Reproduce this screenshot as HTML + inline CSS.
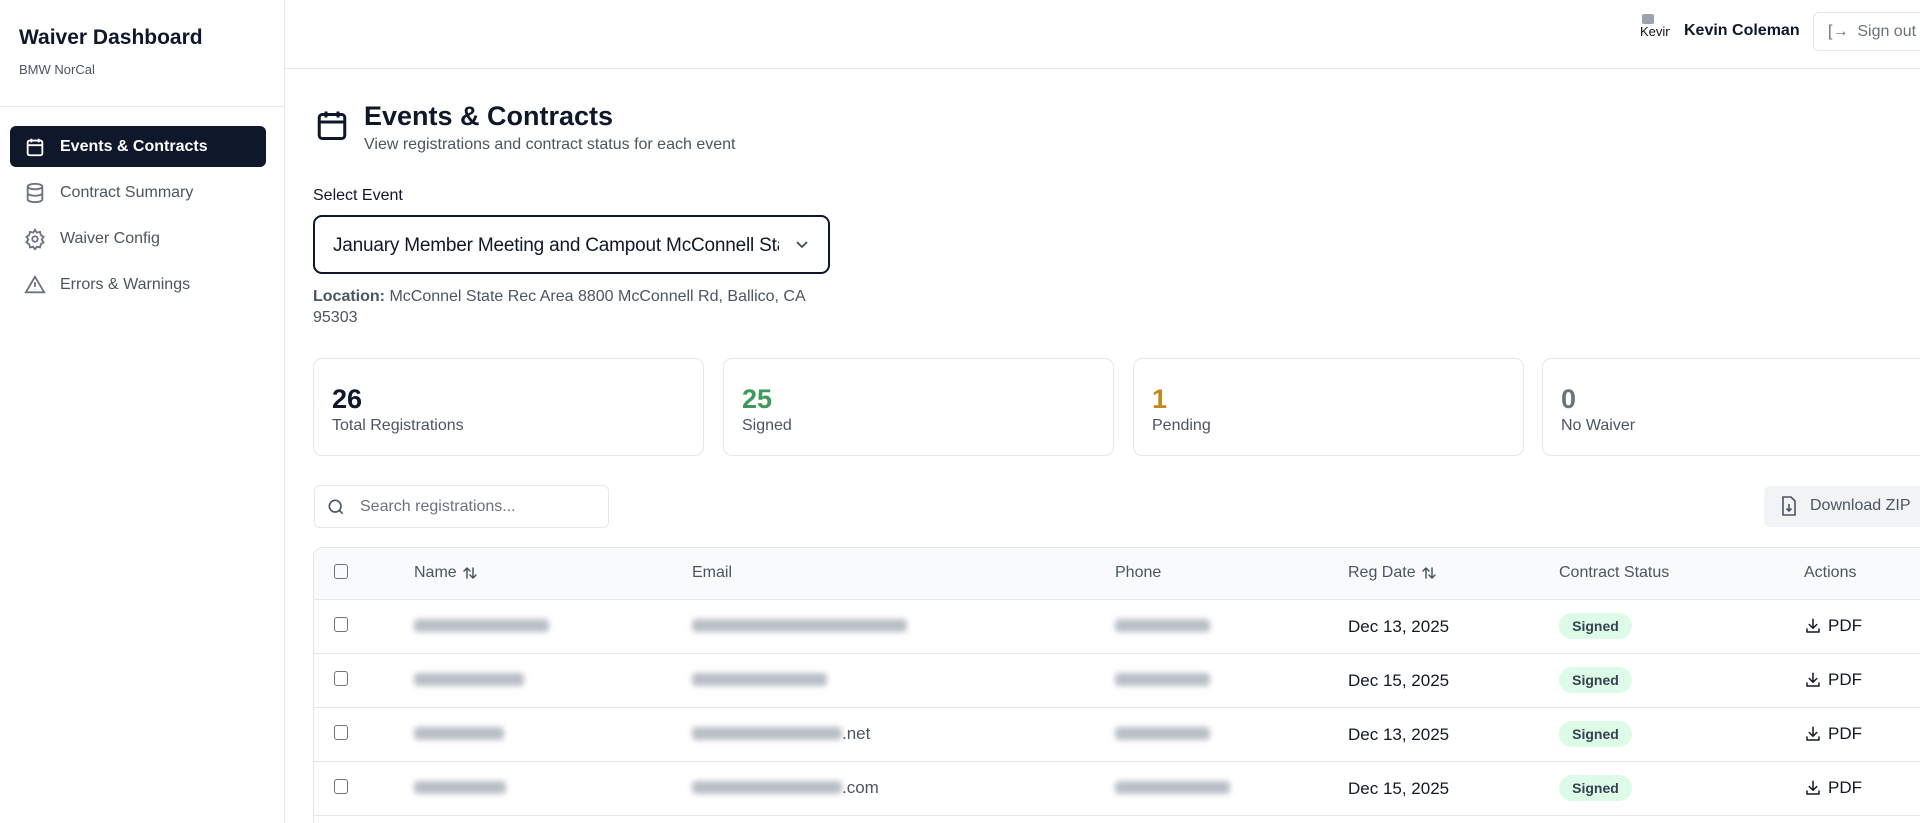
<!DOCTYPE html>
<html><head><meta charset="utf-8"><style>
*{box-sizing:border-box;margin:0;padding:0}
html,body{width:1920px;height:823px;overflow:hidden}
body{background:#fff;font-family:"Liberation Sans",sans-serif;color:#0f172a;position:relative}
.abs{position:absolute}
.side{left:0;top:0;width:285px;height:823px;border-right:1px solid #e5e7eb}
.nav{position:absolute;left:10px;width:256px;height:41px;border-radius:6px;display:flex;align-items:center;padding-left:14px;font-size:16px;color:#4b5563;font-weight:500}
.nav svg{margin-right:14px}
.nav.act{background:#0f172a;color:#fff;font-weight:600}
.card{position:absolute;top:358px;height:98px;border:1px solid #e5e7eb;border-radius:9px;width:391px}
.card .n{position:absolute;left:18px;top:25px;font-size:27px;font-weight:700}
.card .l{position:absolute;left:18px;top:58px;font-size:16px;color:#4b5563}
.th{position:absolute;font-size:16px;color:#4b5563;font-weight:500;line-height:20px;display:flex;align-items:center;gap:5px}
.cb{position:absolute;left:334px;width:14px;height:15px;border:1.5px solid #6b7280;border-radius:3px}
.blur{position:absolute;height:13px;background:#9ca3af;filter:blur(3px);border-radius:4px;opacity:.7}
.date{position:absolute;left:1348px;font-size:17px;color:#111827}
.badge{position:absolute;left:1559px;width:73px;height:26px;border-radius:13px;background:#dcfce7;color:#374151;font-size:14px;font-weight:600;text-align:center;line-height:26px}
.pdf{position:absolute;left:1804px;font-size:17px;color:#111827;display:flex;align-items:center;gap:6px;line-height:20px}
.row{position:absolute;left:313px;width:1607px;height:1px;background:#e5e7eb}
</style></head><body>
<svg width="0" height="0" style="position:absolute"><defs>
<symbol id="dl" viewBox="0 0 24 24"><path d="M12 3v12M7 10l5 5 5-5M4 16v4h16v-4" fill="none" stroke="#111827" stroke-width="2" stroke-linecap="round" stroke-linejoin="round"/></symbol>
<symbol id="sort" viewBox="0 0 16 16"><path d="M5 13V3M2 6l3-3 3 3M11 3v10M8 10l3 3 3-3" fill="none" stroke="#4b5563" stroke-width="1.5" stroke-linecap="round" stroke-linejoin="round"/></symbol>
</defs></svg>
<div class="abs side">
  <div class="abs" style="left:19px;top:26px;font-size:21px;font-weight:700">Waiver Dashboard</div>
  <div class="abs" style="left:19px;top:62px;font-size:13px;color:#4b5563">BMW NorCal</div>
  <div class="abs" style="left:0;top:106px;width:285px;height:1px;background:#e5e7eb"></div>
  <div class="nav act" style="top:126px"><svg width="22" height="22" viewBox="0 0 24 24" fill="none" stroke="#fff" stroke-width="2"><rect x="4" y="5" width="16" height="16" rx="2"/><path d="M8 3v4M16 3v4M4 10h16"/></svg>Events &amp; Contracts</div>
  <div class="nav" style="top:172px"><svg width="22" height="22" viewBox="0 0 24 24" fill="none" stroke="#6b7280" stroke-width="2"><ellipse cx="12" cy="5" rx="8" ry="3"/><path d="M4 5v14c0 1.7 3.6 3 8 3s8-1.3 8-3V5M4 12c0 1.7 3.6 3 8 3s8-1.3 8-3"/></svg>Contract Summary</div>
  <div class="nav" style="top:218px"><svg width="22" height="22" viewBox="0 0 24 24" fill="none" stroke="#6b7280" stroke-width="2"><circle cx="12" cy="12" r="3"/><path d="M12 2l2 3 3.5-.8.8 3.5 3 2-2 3 2 3-3 2-.8 3.5-3.5-.8-2 3-2-3-3.5.8-.8-3.5-3-2 2-3-2-3 3-2 .8-3.5 3.5.8z"/></svg>Waiver Config</div>
  <div class="nav" style="top:264px"><svg width="22" height="22" viewBox="0 0 24 24" fill="none" stroke="#6b7280" stroke-width="2"><path d="M12 3L2 20h20z M12 9v5M12 17v.5"/></svg>Errors &amp; Warnings</div>
</div>
<div class="abs" style="left:285px;top:68px;width:1635px;height:1px;background:#e5e7eb"></div>
<div class="abs" style="left:1640px;top:14px;width:30px;height:34px;font-size:13px;overflow:hidden;color:#111"><div style="width:12px;height:10px;background:#9ca3af;margin-left:2px;border-radius:2px"></div>Kevin</div>
<div class="abs" style="left:1684px;top:22px;font-size:16px;font-weight:600">Kevin Coleman</div>
<div class="abs" style="left:1813px;top:12px;width:107px;height:39px;border:1px solid #e5e7eb;border-right:none;border-radius:6px 0 0 6px;font-size:16px;color:#6b7280;padding:10px 0 0 14px;white-space:nowrap;overflow:hidden">[→&nbsp; Sign out</div>

<svg class="abs" style="left:314px;top:107px" width="36" height="36" viewBox="0 0 24 24" fill="none" stroke="#0f172a" stroke-width="2"><rect x="3.5" y="5" width="17" height="16" rx="2"/><path d="M8 3v4M16 3v4M3.5 10h17"/></svg>
<div class="abs" style="left:364px;top:101px;font-size:27px;font-weight:700">Events &amp; Contracts</div>
<div class="abs" style="left:364px;top:136px;font-size:16px;color:#4b5563">View registrations and contract status for each event</div>
<div class="abs" style="left:313px;top:187px;font-size:16px;font-weight:500">Select Event</div>
<div class="abs" style="left:313px;top:215px;width:517px;height:59px;border:2px solid #0f172a;border-radius:9px;font-size:19px;padding:18px 0 0 18px;overflow:hidden;white-space:nowrap"><span style="display:inline-block;width:446px;overflow:hidden;vertical-align:top;letter-spacing:-0.2px">January Member Meeting and Campout McConnell State</span><svg style="position:absolute;right:18px;top:22px" width="16" height="12" viewBox="0 0 16 12" fill="none" stroke="#374151" stroke-width="1.6"><path d="M3 3l5 5 5-5"/></svg></div>
<div class="abs" style="left:313px;top:286px;width:520px;font-size:16px;color:#4b5563;line-height:21px"><b style="font-weight:600">Location:</b> McConnel State Rec Area 8800 McConnell Rd, Ballico, CA 95303</div>

<div class="card" style="left:313px"><div class="n">26</div><div class="l">Total Registrations</div></div>
<div class="card" style="left:723px"><div class="n" style="color:#3f9a5a">25</div><div class="l">Signed</div></div>
<div class="card" style="left:1133px"><div class="n" style="color:#c28a1e">1</div><div class="l">Pending</div></div>
<div class="card" style="left:1542px;width:378px;border-right:none;border-radius:9px 0 0 9px"><div class="n" style="color:#6b7280">0</div><div class="l">No Waiver</div></div>

<div class="abs" style="left:314px;top:485px;width:295px;height:43px;border:1px solid #e5e7eb;border-radius:6px;font-size:16px;color:#6b7280;padding:12px 0 0 45px">Search registrations...</div>
<svg class="abs" style="left:326px;top:497px" width="20" height="20" viewBox="0 0 24 24" fill="none" stroke="#4b5563" stroke-width="2"><circle cx="11" cy="11" r="7"/><path d="M16 16l4 4"/></svg>
<div class="abs" style="left:1764px;top:486px;width:156px;height:41px;background:#f1f3f5;border-radius:6px 0 0 6px;font-size:16px;color:#4b5563;padding:11px 0 0 46px;white-space:nowrap;overflow:hidden">Download ZIP</div>
<svg class="abs" style="left:1780px;top:496px" width="18" height="20" viewBox="0 0 18 20" fill="none" stroke="#4b5563" stroke-width="1.6"><path d="M3 1h8l4 4v14H3z M9 8v7M6.5 12.5L9 15l2.5-2.5"/></svg>

<div class="abs" style="left:313px;top:547px;width:1607px;height:276px;border:1px solid #e5e7eb;border-right:none;border-bottom:none;border-radius:9px 0 0 0"></div>
<div class="abs" style="left:314px;top:548px;width:1606px;height:51px;background:#f9fafb;border-radius:9px 0 0 0"></div>
<div class="row" style="top:599px"></div><div class="row" style="top:653px"></div><div class="row" style="top:707px"></div><div class="row" style="top:761px"></div><div class="row" style="top:815px"></div>
<div class="cb" style="top:564px"></div>
<div class="th" style="left:414px;top:563px">Name <svg width="16" height="16"><use href="#sort"/></svg></div>
<div class="th" style="left:692px;top:563px">Email</div>
<div class="th" style="left:1115px;top:563px">Phone</div>
<div class="th" style="left:1348px;top:563px">Reg Date <svg width="16" height="16"><use href="#sort"/></svg></div>
<div class="th" style="left:1559px;top:563px">Contract Status</div>
<div class="th" style="left:1804px;top:563px">Actions</div>

<div class="cb" style="top:617px"></div><div class="blur" style="left:414px;top:619px;width:135px"></div><div class="blur" style="left:692px;top:619px;width:215px"></div><div class="blur" style="left:1115px;top:619px;width:95px"></div>
<div class="date" style="top:617px">Dec 13, 2025</div><div class="badge" style="top:613px">Signed</div><div class="pdf" style="top:616px"><svg width="18" height="18"><use href="#dl"/></svg>PDF</div>

<div class="cb" style="top:671px"></div><div class="blur" style="left:414px;top:673px;width:110px"></div><div class="blur" style="left:692px;top:673px;width:135px"></div><div class="blur" style="left:1115px;top:673px;width:95px"></div>
<div class="date" style="top:671px">Dec 15, 2025</div><div class="badge" style="top:667px">Signed</div><div class="pdf" style="top:670px"><svg width="18" height="18"><use href="#dl"/></svg>PDF</div>

<div class="cb" style="top:725px"></div><div class="blur" style="left:414px;top:727px;width:90px"></div><div class="blur" style="left:692px;top:727px;width:150px"></div><span class="abs" style="left:842px;top:724px;font-size:17px;color:#4b5563">.net</span><div class="blur" style="left:1115px;top:727px;width:95px"></div>
<div class="date" style="top:725px">Dec 13, 2025</div><div class="badge" style="top:721px">Signed</div><div class="pdf" style="top:724px"><svg width="18" height="18"><use href="#dl"/></svg>PDF</div>

<div class="cb" style="top:779px"></div><div class="blur" style="left:414px;top:781px;width:92px"></div><div class="blur" style="left:692px;top:781px;width:150px"></div><span class="abs" style="left:842px;top:778px;font-size:17px;color:#4b5563">.com</span><div class="blur" style="left:1115px;top:781px;width:115px"></div>
<div class="date" style="top:779px">Dec 15, 2025</div><div class="badge" style="top:775px">Signed</div><div class="pdf" style="top:778px"><svg width="18" height="18"><use href="#dl"/></svg>PDF</div>
</body></html>
